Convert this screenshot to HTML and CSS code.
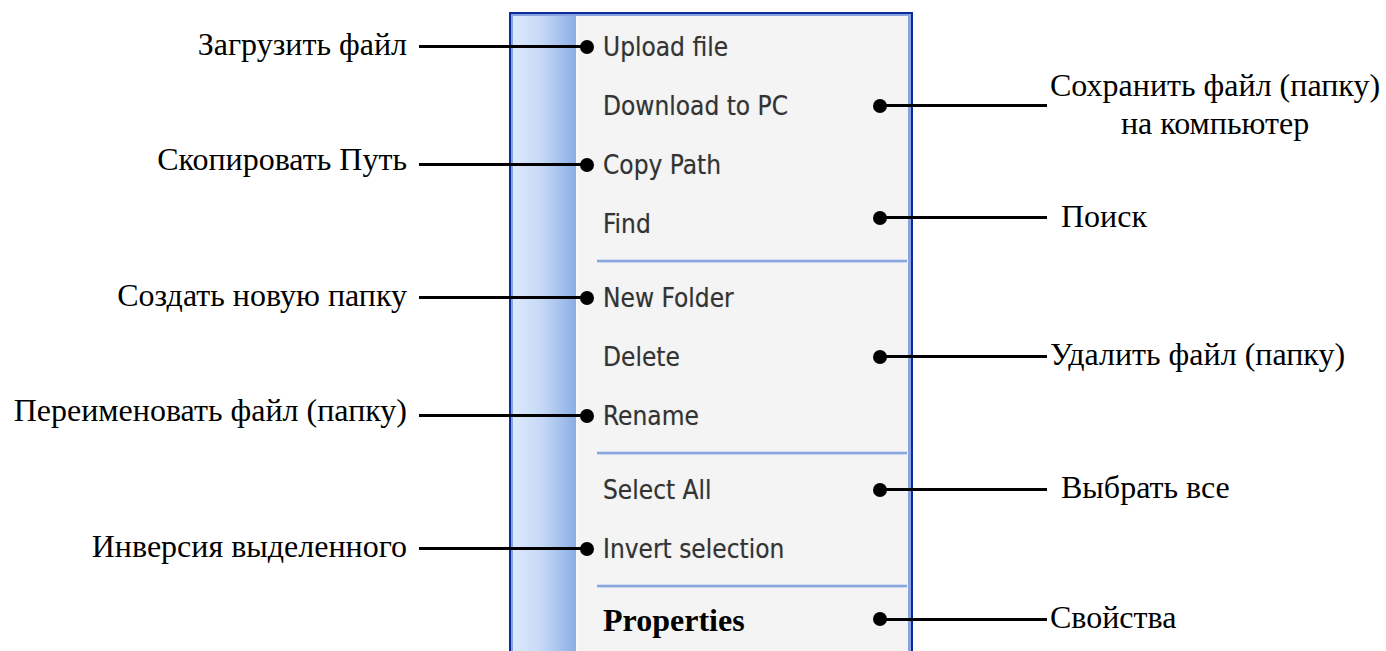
FILE: index.html
```html
<!DOCTYPE html>
<html lang="ru">
<head>
  <meta charset="UTF-8">
  <title>Контекстное меню</title>
  <link rel="stylesheet" href="styles.css">
</head>
<body>
  <div class="figure">
    <div class="row row-top">
      <div class="note-left"></div>
      <div class="menu menu-top"></div>
      <div class="note-right"></div>
    </div>

    <div class="row item callout-left">
      <div class="note-left">Загрузить файл</div>
      <div class="menu"><span class="entry">Upload file</span></div>
      <div class="note-right"></div>
    </div>
    <div class="row item callout-right">
      <div class="note-left"></div>
      <div class="menu"><span class="entry">Download to PC</span></div>
      <div class="note-right note-two">Сохранить файл (папку)<br>на компьютер</div>
    </div>
    <div class="row item callout-left">
      <div class="note-left note-up">Скопировать Путь</div>
      <div class="menu"><span class="entry">Copy Path</span></div>
      <div class="note-right"></div>
    </div>
    <div class="row item callout-right callout-up">
      <div class="note-left"></div>
      <div class="menu"><span class="entry">Find</span></div>
      <div class="note-right note-far">Поиск</div>
    </div>

    <div class="row sep">
      <div class="note-left"></div>
      <div class="menu"><span class="rule"></span></div>
      <div class="note-right"></div>
    </div>

    <div class="row item callout-left">
      <div class="note-left">Создать новую папку</div>
      <div class="menu"><span class="entry">New Folder</span></div>
      <div class="note-right"></div>
    </div>
    <div class="row item callout-right">
      <div class="note-left"></div>
      <div class="menu"><span class="entry">Delete</span></div>
      <div class="note-right">Удалить файл (папку)</div>
    </div>
    <div class="row item callout-left">
      <div class="note-left note-up">Переименовать файл (папку)</div>
      <div class="menu"><span class="entry">Rename</span></div>
      <div class="note-right"></div>
    </div>

    <div class="row sep">
      <div class="note-left"></div>
      <div class="menu"><span class="rule"></span></div>
      <div class="note-right"></div>
    </div>

    <div class="row item callout-right">
      <div class="note-left"></div>
      <div class="menu"><span class="entry">Select All</span></div>
      <div class="note-right note-far">Выбрать все</div>
    </div>
    <div class="row item callout-left">
      <div class="note-left">Инверсия выделенного</div>
      <div class="menu"><span class="entry">Invert selection</span></div>
      <div class="note-right"></div>
    </div>

    <div class="row sep">
      <div class="note-left"></div>
      <div class="menu"><span class="rule"></span></div>
      <div class="note-right"></div>
    </div>

    <div class="row item item-last callout-right">
      <div class="note-left"></div>
      <div class="menu"><span class="entry entry-bold">Properties</span></div>
      <div class="note-right">Свойства</div>
    </div>
  </div>
</body>
</html>
```

FILE: styles.css
```css
body {
  margin: 0;
  background: #fff;
  font-family: "Liberation Serif", "Times New Roman", serif;
  color: #000;
  overflow: hidden;
}
.figure {
  display: flex;
  flex-direction: column;
  padding-top: 12px;
  height: 651px;
  box-sizing: border-box;
  overflow: hidden;
}
.row {
  display: grid;
  grid-template-columns: 509px 404px 1fr;
  grid-template-rows: minmax(0, 1fr);
  position: relative;
  flex: none;
}
.row-top { height: 5px; }
.item { height: 59px; }
.item-last { height: 58px; }
.sep { height: 15px; }

/* подписи слева и справа */
.note-left,
.note-right {
  display: flex;
  align-items: center;
  font-size: 32px;
  line-height: 38px;
  padding-bottom: 6px;
  box-sizing: border-box;
  min-height: 0;
}
.note-left {
  justify-content: flex-end;
  padding-right: 102px;
  white-space: nowrap;
}
.note-right {
  padding-left: 137px;
  white-space: nowrap;
}
.note-far { padding-left: 148px; }
.note-up { padding-bottom: 12px; }
.note-two {
  text-align: center;
  padding-bottom: 4px;
}

/* меню в стиле XP */
.menu {
  box-sizing: border-box;
  border-left: 2px solid #0b2b9e;
  border-right: 2px solid #0b2b9e;
  box-shadow: inset 2px 0 0 #87a3e0, inset -3px 0 0 #87a3e0;
  background:
    linear-gradient(to right, #dde9fc, #c6d9f7 45%, #8badE5) 2px 0 / 63px 100% no-repeat,
    linear-gradient(to right, #f7f9fd, #f7f9fd) 65px 0 / 2px 100% no-repeat,
    #f4f4f4;
  display: flex;
  align-items: center;
  min-height: 0;
}
.menu-top {
  border-top: 2px solid #0b2b9e;
  box-shadow: inset 2px 0 0 #87a3e0, inset -3px 0 0 #87a3e0, inset 0 2px 0 #87a3e0;
}
.entry {
  padding-left: 92px;
  font-family: "DejaVu Sans Condensed", "DejaVu Sans", sans-serif;
  font-stretch: condensed;
  font-size: 26px;
  color: #333;
  text-shadow: 0 0 1px rgba(0, 0, 0, 0.25);
}
.entry-bold {
  font-family: "Liberation Serif", "Times New Roman", serif;
  font-weight: bold;
  font-size: 32px;
  color: #000;
  text-shadow: none;
  padding-bottom: 4px;
}
.item-last .note-right { padding-bottom: 10px; }
.sep .menu { align-items: flex-start; }
.rule {
  display: block;
  margin: 7px 4px 0 86px;
  flex: 1;
  height: 2px;
  background: #8aa6dc;
  box-shadow: 0 1px 0 #c9d6f0, 0 -1px 0 #d3def3;
}

/* выноски: линия и точка поверх меню */
.callout-left::before,
.callout-right::before {
  content: "";
  position: absolute;
  top: calc(50% - 1.5px);
  height: 3px;
  background: #000;
}
.callout-left::after,
.callout-right::after {
  content: "";
  position: absolute;
  top: calc(50% - 7px);
  width: 14px;
  height: 14px;
  border-radius: 50%;
  background: #000;
}
.callout-left::before { left: 419px; width: 166px; }
.callout-left::after { left: 580px; }
.callout-right::before { left: 880px; width: 167px; }
.callout-right::after { left: 873px; }
.callout-up::before { top: calc(50% - 7.5px); }
.callout-up::after { top: calc(50% - 13px); }
.callout-up .note-right { padding-bottom: 16px; }
.item-last::before { top: calc(50% - 4.5px); }
.item-last::after { top: calc(50% - 10px); }
```
